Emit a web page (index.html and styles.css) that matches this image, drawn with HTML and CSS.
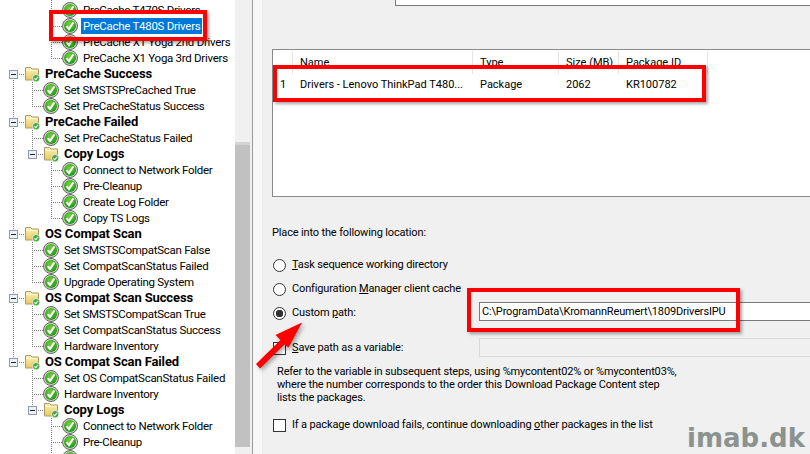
FILE: index.html
```html
<!DOCTYPE html>
<html lang="en">
<head>
<meta charset="utf-8">
<title>Download Package Content</title>
<link rel="stylesheet" href="styles.css">
</head>
<body>
<svg class="defs" width="0" height="0" aria-hidden="true">
  <defs>
    <radialGradient id="gr" cx="45%" cy="35%" r="70%"><stop offset="0" stop-color="#7ad23c"/><stop offset="1" stop-color="#149414"/></radialGradient>
    <linearGradient id="fo" x1="0" y1="0" x2="0" y2="1"><stop offset="0" stop-color="#fff2b0"/><stop offset="1" stop-color="#e8c860"/></linearGradient>
    <symbol id="ok" viewBox="0 0 16 16">
      <circle cx="8" cy="8" r="7.500" fill="#cfd2c8" stroke="#5f6a5a"/>
      <circle cx="8" cy="8" r="6" fill="url(#gr)"/>
      <path d="M4.600 8.200 7 11 11.400 4.400" fill="none" stroke="#fff" stroke-width="2"/>
    </symbol>
    <symbol id="fd" viewBox="0 0 16 16">
      <path d="M1.500 1.500h5l1.500 1.500h6.500v11h-13z" fill="url(#fo)" stroke="#a89a6a"/>
      <path d="M2.500 4.500h11" stroke="#fffbe0"/>
      <circle cx="12.200" cy="12.200" r="3.700" fill="#3fa53f" stroke="#e8f0e0"/>
      <path d="M10.400 12.300 11.800 13.700 14 10.800" fill="none" stroke="#fff" stroke-width="1.200"/>
    </symbol>
    <symbol id="ex" viewBox="0 0 9 9">
      <rect x=".5" y=".5" width="8" height="8" fill="#eef0f4" stroke="#8e9aa8"/>
      <path d="M2 4.500h5" stroke="#222"/>
    </symbol>
  </defs>
</svg>
<div class="app">
  <div class="tree">
    <svg class="lines" width="235" height="454" aria-hidden="true">
      <path d="M13.500 74V362M32.500 82V106M32.500 130V154M32.500 242V282M32.500 306V346M32.500 370V410M51.500 0V58M51.500 162V218M51.500 418V454"/>
      <path d="M51 10.500H62M51 26.500H62M51 42.500H62M51 58.500H62M13 74.500H24M32 90.500H43M32 106.500H43M13 122.500H24M32 138.500H43M32 154.500H43M51 170.500H62M51 186.500H62M51 202.500H62M51 218.500H62M13 234.500H24M32 250.500H43M32 266.500H43M32 282.500H43M13 298.500H24M32 314.500H43M32 330.500H43M32 346.500H43M13 362.500H24M32 378.500H43M32 394.500H43M32 410.500H43M51 426.500H62M51 442.500H62"/>
    </svg>
    <div class="row l3"><svg class="ic"><use href="#ok"/></svg><span class="lb">PreCache T470S Drivers</span></div>
    <div class="row l3"><svg class="ic"><use href="#ok"/></svg><span class="lb sel">PreCache T480S Drivers</span></div>
    <div class="row l3"><svg class="ic"><use href="#ok"/></svg><span class="lb">PreCache X1 Yoga 2nd Drivers</span></div>
    <div class="row l3"><svg class="ic"><use href="#ok"/></svg><span class="lb">PreCache X1 Yoga 3rd Drivers</span></div>
    <div class="row l1"><svg class="exp"><use href="#ex"/></svg><svg class="ic"><use href="#fd"/></svg><span class="lb grp">PreCache Success</span></div>
    <div class="row l2"><svg class="ic"><use href="#ok"/></svg><span class="lb">Set SMSTSPreCached True</span></div>
    <div class="row l2"><svg class="ic"><use href="#ok"/></svg><span class="lb">Set PreCacheStatus Success</span></div>
    <div class="row l1"><svg class="exp"><use href="#ex"/></svg><svg class="ic"><use href="#fd"/></svg><span class="lb grp">PreCache Failed</span></div>
    <div class="row l2"><svg class="ic"><use href="#ok"/></svg><span class="lb">Set PreCacheStatus Failed</span></div>
    <div class="row l2f"><svg class="exp"><use href="#ex"/></svg><svg class="ic"><use href="#fd"/></svg><span class="lb grp">Copy Logs</span></div>
    <div class="row l3"><svg class="ic"><use href="#ok"/></svg><span class="lb">Connect to Network Folder</span></div>
    <div class="row l3"><svg class="ic"><use href="#ok"/></svg><span class="lb">Pre-Cleanup</span></div>
    <div class="row l3"><svg class="ic"><use href="#ok"/></svg><span class="lb">Create Log Folder</span></div>
    <div class="row l3"><svg class="ic"><use href="#ok"/></svg><span class="lb">Copy TS Logs</span></div>
    <div class="row l1"><svg class="exp"><use href="#ex"/></svg><svg class="ic"><use href="#fd"/></svg><span class="lb grp">OS Compat Scan</span></div>
    <div class="row l2"><svg class="ic"><use href="#ok"/></svg><span class="lb">Set SMSTSCompatScan False</span></div>
    <div class="row l2"><svg class="ic"><use href="#ok"/></svg><span class="lb">Set CompatScanStatus Failed</span></div>
    <div class="row l2"><svg class="ic"><use href="#ok"/></svg><span class="lb">Upgrade Operating System</span></div>
    <div class="row l1"><svg class="exp"><use href="#ex"/></svg><svg class="ic"><use href="#fd"/></svg><span class="lb grp">OS Compat Scan Success</span></div>
    <div class="row l2"><svg class="ic"><use href="#ok"/></svg><span class="lb">Set SMSTSCompatScan True</span></div>
    <div class="row l2"><svg class="ic"><use href="#ok"/></svg><span class="lb">Set CompatScanStatus Success</span></div>
    <div class="row l2"><svg class="ic"><use href="#ok"/></svg><span class="lb">Hardware Inventory</span></div>
    <div class="row l1"><svg class="exp"><use href="#ex"/></svg><svg class="ic"><use href="#fd"/></svg><span class="lb grp">OS Compat Scan Failed</span></div>
    <div class="row l2"><svg class="ic"><use href="#ok"/></svg><span class="lb">Set OS CompatScanStatus Failed</span></div>
    <div class="row l2"><svg class="ic"><use href="#ok"/></svg><span class="lb">Hardware Inventory</span></div>
    <div class="row l2f"><svg class="exp"><use href="#ex"/></svg><svg class="ic"><use href="#fd"/></svg><span class="lb grp">Copy Logs</span></div>
    <div class="row l3"><svg class="ic"><use href="#ok"/></svg><span class="lb">Connect to Network Folder</span></div>
    <div class="row l3"><svg class="ic"><use href="#ok"/></svg><span class="lb">Pre-Cleanup</span></div>
    <div class="row l3"><svg class="ic"><use href="#ok"/></svg><span class="lb">Create Log Folder</span></div>
  </div>
  <div class="scroll"><div class="thumb"></div></div>
  <div class="gutter"></div>
  <main class="dialog">
    <div class="topbox"></div>
    <div class="list">
      <div class="cols head"><span></span><span>Name</span><span>Type</span><span>Size (MB)</span><span>Package ID</span></div>
      <div class="cols item"><span>1</span><span>Drivers - Lenovo ThinkPad T480...</span><span>Package</span><span>2062</span><span>KR100782</span></div>
    </div>
    <p class="place">Place into the following location:</p>
    <div class="opt first"><span class="radio"></span><span><u>T</u>ask sequence working directory</span></div>
    <div class="opt"><span class="radio"></span><span>Configuration <u>M</u>anager client cache</span></div>
    <div class="opt path"><span class="radio on"></span><span class="optlabel">Custom <u>p</u>ath:</span><div class="field">C:\ProgramData\KromannReumert\1809DriversIPU</div></div>
    <div class="opt save"><span class="check"></span><span class="optlabel"><u>S</u>ave path as a variable:</span><div class="field off"></div></div>
    <p class="note">Refer to the variable in subsequent steps, using %mycontent02% or %mycontent03%,<br>where the number corresponds to the order this Download Package Content step<br>lists the packages.</p>
    <div class="opt cont"><span class="check"></span><span>If a package download fails, continue downloading <u>o</u>ther packages in the list</span></div>
  </main>
</div>
<div class="mark m-tree"></div>
<div class="mark m-row"></div>
<div class="mark m-path"></div>
<svg class="arrow" width="60" height="60" viewBox="250 315 60 60" aria-hidden="true">
  <path d="M302 322.500 275.500 335 280.500 340 256 364 260 368.500 284.500 344.500 288.500 347.500z"/>
</svg>
<div class="brand">imab.dk</div>
</body>
</html>
```
FILE: styles.css
```css
* { box-sizing: border-box; }
html, body { margin: 0; height: 454px; overflow: hidden; }
body {
  position: relative;
  width: 810px;
  background: #f0f0f0;
  color: #000;
  font: 11px/16px Roboto, "Open Sans", sans-serif;
  letter-spacing: -.15px;
}
.defs { position: absolute; }
.app { display: flex; height: 454px; overflow: hidden; }

/* tree */
.tree {
  position: relative;
  flex: 0 0 235px;
  height: 454px;
  padding-top: 2px;
  background: #fff;
  overflow: hidden;
  font-size: 11.5px;
  letter-spacing: -.28px;
}
.lines { position: absolute; left: 0; top: 0; }
.lines path { fill: none; stroke: #808080; stroke-dasharray: 1 1; shape-rendering: crispEdges; }
.row { position: relative; display: flex; align-items: center; height: 16px; white-space: nowrap; }
.l1 { padding-left: 9px; }
.l2 { padding-left: 43px; }
.l2f { padding-left: 28px; }
.l3 { padding-left: 62px; }
.ic { flex: none; width: 16px; height: 16px; }
.exp { flex: none; width: 9px; height: 9px; margin-right: 6px; }
.lb { margin-left: 3px; padding: 0 2px; height: 16px; line-height: 16px; }
.grp { font-size: 13px; font-weight: 700; letter-spacing: -.12px; }
.sel { background: #0078d7; color: #fff; }

/* scrollbar */
.scroll { flex: 0 0 17px; padding: 142px 2px 7px 0; background: #f0f0f0; }
.thumb { height: 100%; background: #c1c1c1; border-top: 3px solid #d4d4d4; }
.gutter { flex: 0 0 11px; border-left: 1px solid #9a9a9a; background: #f7f7f7; border-right: 1px solid #ececec; }

/* dialog */
.dialog { flex: 1; padding-left: 9px; min-width: 0; }
.topbox {
  height: 6px;
  margin-left: 123px;
  margin-right: -4px;
  background: #fff;
  border: 1px solid #7a7a7a;
  border-top: 0;
}
.list {
  height: 148px;
  margin-top: 43px;
  margin-right: -4px;
  background: #fff;
  border: 1px solid #8a8a8a;
  border-right: 0;
}
.cols { display: grid; grid-template-columns: 20px 180px 86px 60px 89px; letter-spacing: 0; }
.cols span { padding-left: 7px; white-space: nowrap; }
.head { height: 24px; padding-top: 1px; line-height: 23px; }
.head span { border-right: 1px solid #e5e5e5; }
.item { height: 20px; padding-top: 1px; line-height: 19px; }
.place { margin: 27px 0 0; height: 18px; line-height: 18px; }
.opt { display: flex; align-items: center; height: 18px; white-space: nowrap; }
.opt.first { margin-top: 14px; }
.opt + .opt { margin-top: 6px; }
.opt.save { margin-top: 17px; }
.radio {
  flex: none;
  width: 13px; height: 13px;
  margin-right: 6px;
  margin-left: 1px;
  border: 1px solid #333;
  border-radius: 50%;
  background: #fff;
}
.radio.on { background: radial-gradient(circle, #333 0 3.5px, #fff 4px); }
.check {
  flex: none;
  width: 13px; height: 13px;
  margin-right: 6px;
  margin-left: 1px;
  border: 1px solid #333;
  background: #fff;
}
.optlabel { flex: 0 0 187px; }
.field {
  flex: 1;
  align-self: flex-start;
  height: 19px;
  margin-top: -2px;
  margin-right: -4px;
  padding-left: 2px;
  line-height: 17px;
  letter-spacing: -.16px;
  background: #fff;
  border: 1px solid #7a7a7a;
  border-right: 0;
}
.field.off { margin-top: -1px; background: #f0f0f0; border-color: #d9d9d9; }
.note { margin: 8px 0 0 5px; line-height: 13px; white-space: nowrap; }
.opt.cont { margin-top: 12px; }

/* annotations on top of the screenshot */
.mark { position: absolute; border: 4px solid #f00; box-shadow: 2px 2px 3px rgba(0,0,0,.35); }
.m-tree { left: 49px; top: 10px; width: 158px; height: 31px; }
.m-row { left: 273px; top: 65px; width: 433px; height: 37px; }
.m-path { left: 467px; top: 288px; width: 273px; height: 44px; }
.arrow { position: absolute; left: 250px; top: 315px; filter: drop-shadow(2px 2px 2px rgba(0,0,0,.35)); }
.arrow path { fill: #f00; }
.brand {
  position: absolute;
  left: 687px;
  top: 423px;
  font: 700 26px/30px "DejaVu Sans", sans-serif;
  letter-spacing: 0;
  color: #8b9390;
}
```
